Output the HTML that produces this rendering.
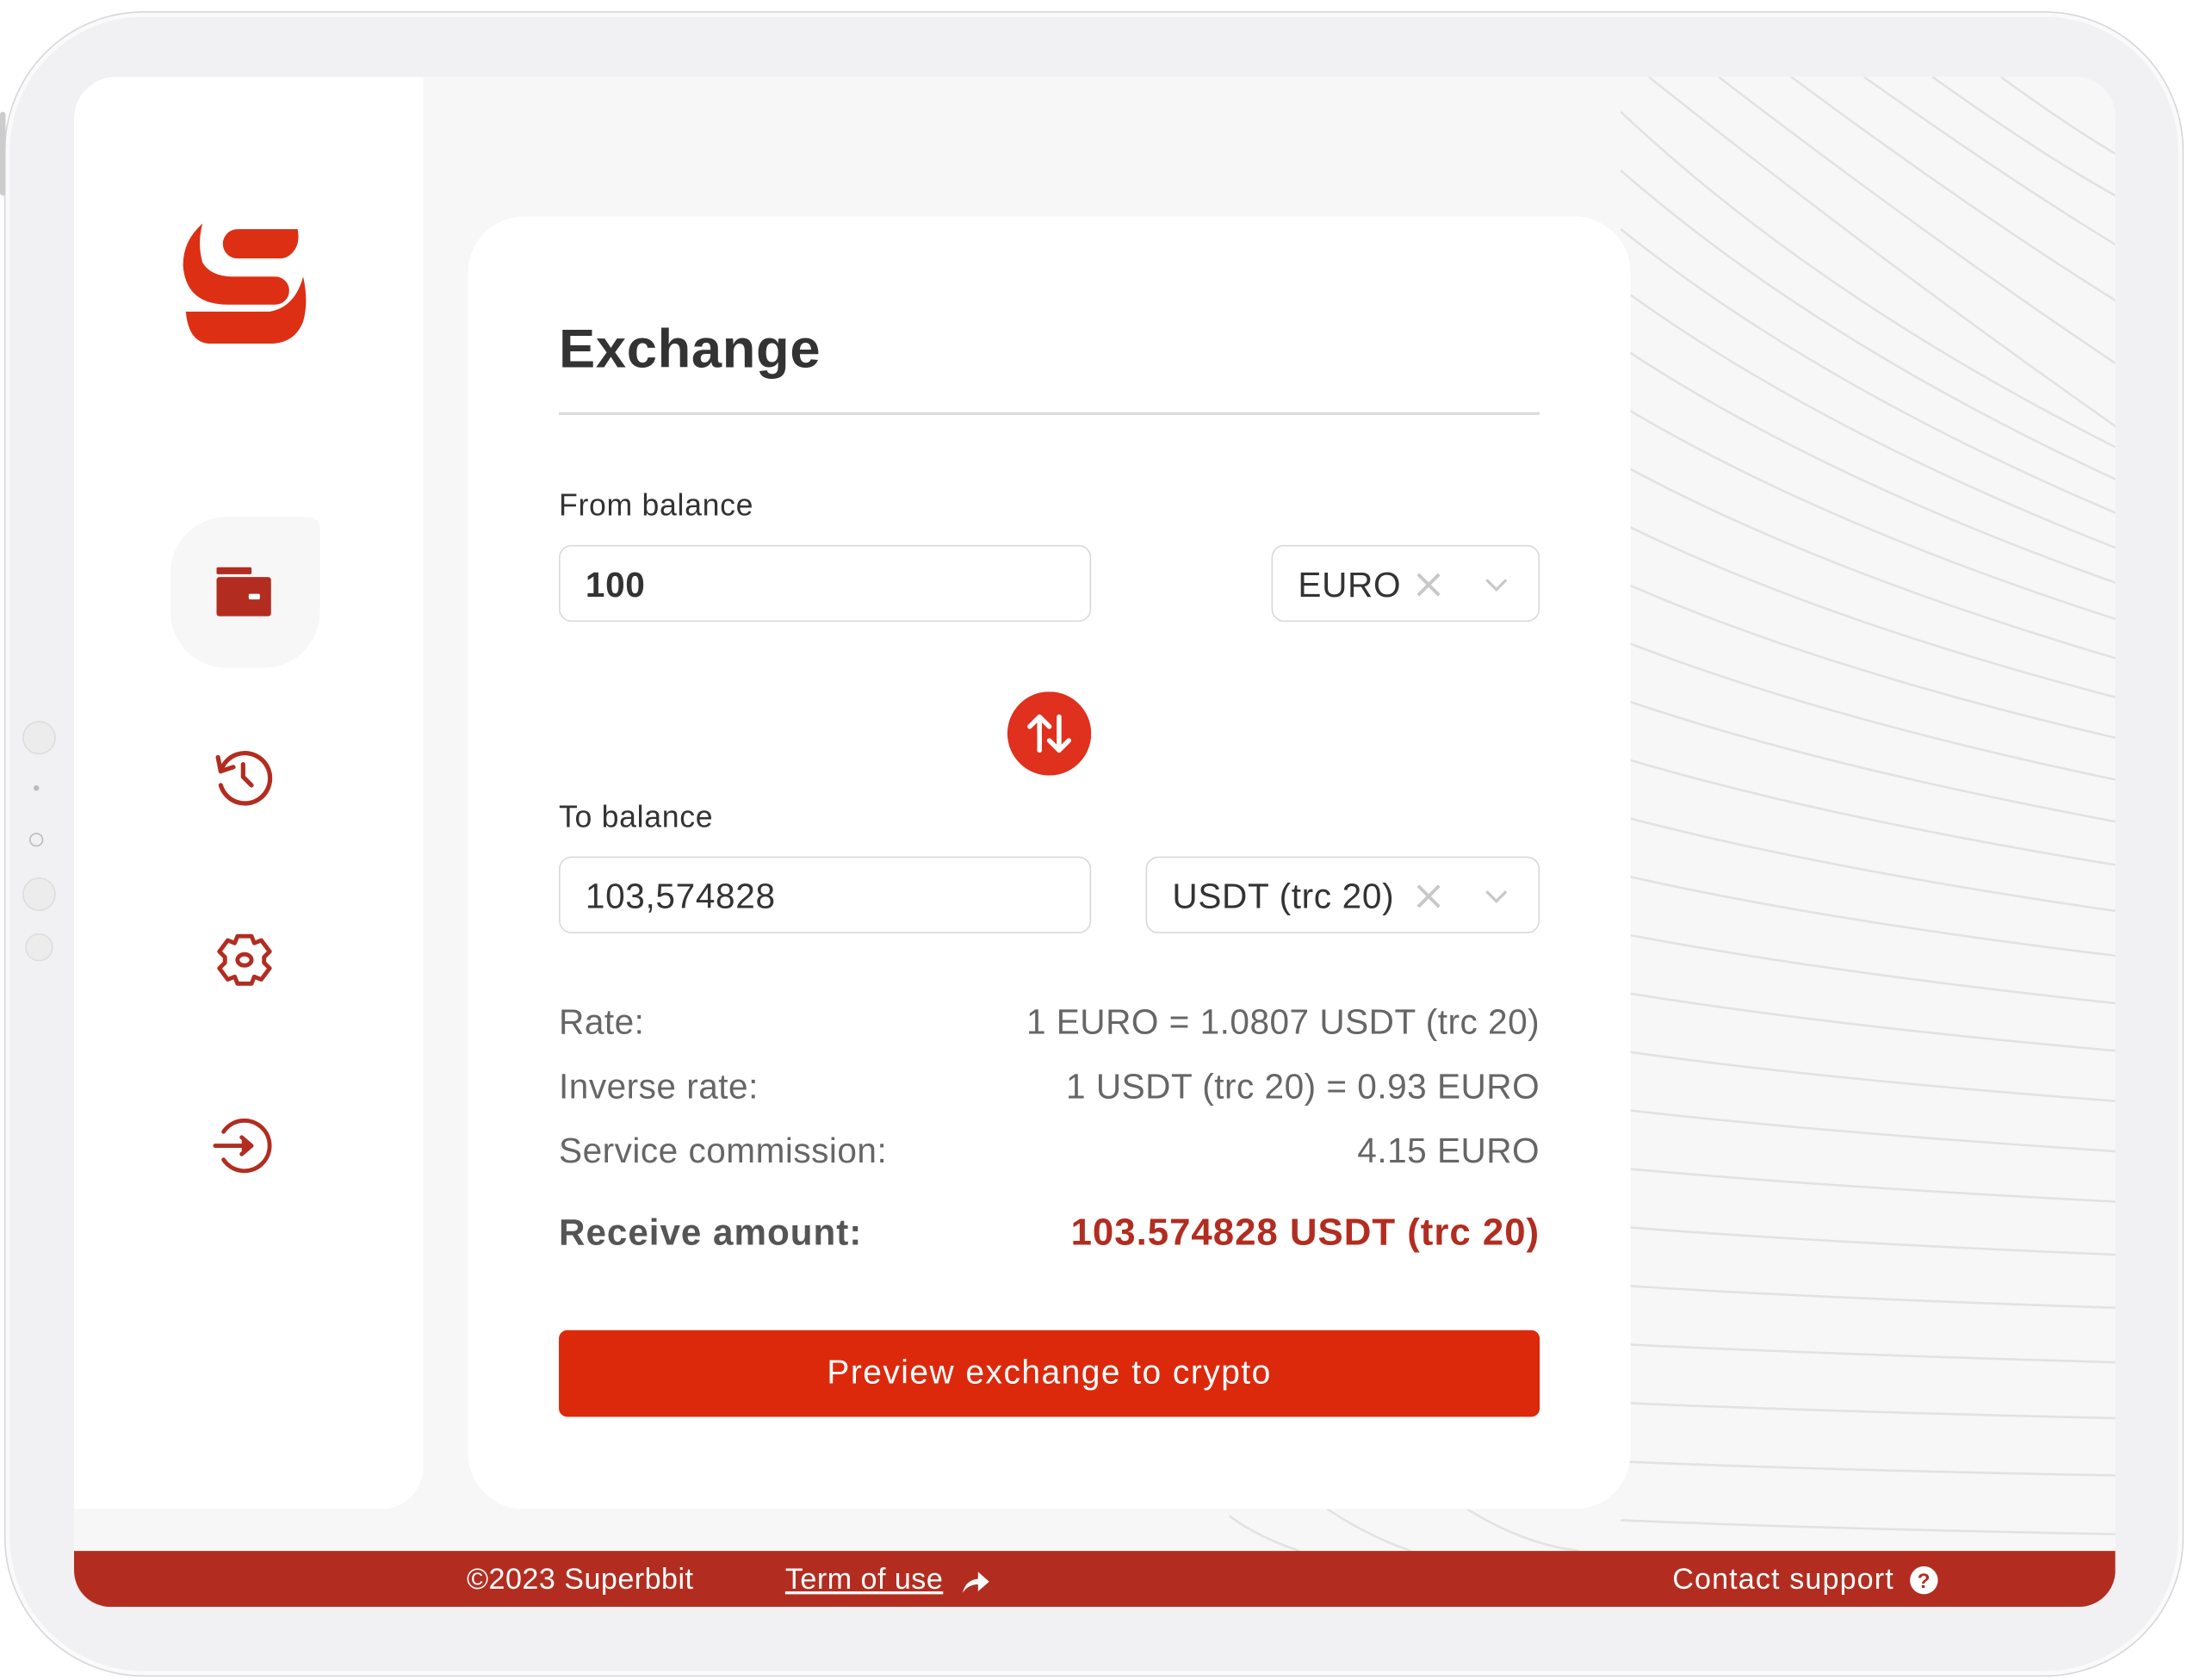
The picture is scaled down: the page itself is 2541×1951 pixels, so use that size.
<!DOCTYPE html>
<html><head><meta charset="utf-8"><style>
html,body{margin:0;padding:0;width:2541px;height:1951px;overflow:hidden;background:#fff;}
#w{position:absolute;left:0;top:0;width:1566px;height:1202px;transform:scale(1.62261);transform-origin:0 0;font-family:"Liberation Sans",sans-serif;}
.abs{position:absolute;}
.dev{left:3px;top:8px;width:1558px;height:1190px;border-radius:100px;background:#f1f1f3;border:1px solid #d8d8dc;box-shadow:inset 0 0 0 3px #fafafa;}
.scr{left:53px;top:55px;width:1461px;height:1095px;border-radius:30px 28px 26px 26px;background:#f7f7f7;overflow:hidden;}
.side{left:0;top:0;width:250px;height:1025px;background:#fff;border-radius:30px 0 30px 0;}
.card{left:282px;top:100px;width:832px;height:925px;background:#fff;border-radius:40px;}
.foot{left:0;top:1055px;width:1461px;height:40px;background:#b22d20;color:#fff;font-size:21px;letter-spacing:0.3px;}
.lbl{font-size:22px;color:#333;letter-spacing:0.4px;}
.inp{border:1.5px solid #d9d9d9;border-radius:9px;height:55px;box-sizing:border-box;font-size:25px;color:#333;line-height:57px;padding-left:18px;letter-spacing:0.4px;}
.row{font-size:25px;color:#666;letter-spacing:0.3px;}
</style></head><body><div id="w">
<div class="abs dev"></div>
<div class="abs" style="left:0;top:80px;width:4px;height:60px;background:#ccc;border-radius:2px"></div>
<div class="abs" style="left:16px;top:516px;width:22px;height:22px;border-radius:50%;background:#ececec;border:1px solid #ddd"></div>
<div class="abs" style="left:24px;top:562px;width:4px;height:4px;border-radius:50%;background:#bbb"></div>
<div class="abs" style="left:21px;top:596px;width:10px;height:10px;border-radius:50%;border:1.5px solid #bbb;box-sizing:border-box"></div>
<div class="abs" style="left:16px;top:628px;width:22px;height:22px;border-radius:50%;background:#ececec;border:1px solid #ddd"></div>
<div class="abs" style="left:18px;top:668px;width:18px;height:18px;border-radius:50%;background:#ececec;border:1px solid #ddd"></div>
<div class="abs scr">
<svg class="abs" style="left:0;top:0" width="1461" height="1095" viewBox="53 55 1461 1095" fill="none" stroke="#e2e2e2" stroke-width="1.6">
<path d="M1180 55 Q1350 190 1514 305"/><path d="M1230 55 Q1380 170 1514 260"/><path d="M1282 55 Q1410 150 1514 215"/><path d="M1334 55 Q1440 130 1514 175"/><path d="M1383 55 Q1460 110 1514 140"/><path d="M1432 55 Q1480 90 1514 110"/>
<path d="M1160 80 Q1300 212 1514 320"/><path d="M1160 122 Q1300 244 1514 343"/><path d="M1160 164 Q1300 276 1514 367"/><path d="M1160 206 Q1300 308 1514 392"/><path d="M1160 248 Q1300 341 1514 417"/><path d="M1160 290 Q1300 374 1514 443"/><path d="M1160 332 Q1300 408 1514 471"/><path d="M1160 374 Q1300 443 1514 499"/><path d="M1160 416 Q1300 478 1514 528"/><path d="M1160 458 Q1300 513 1514 558"/><path d="M1160 500 Q1300 548 1514 588"/><path d="M1160 542 Q1300 584 1514 619"/><path d="M1160 584 Q1300 621 1514 652"/><path d="M1160 626 Q1300 658 1514 684"/><path d="M1160 668 Q1300 695 1514 718"/><path d="M1160 710 Q1300 733 1514 752"/><path d="M1160 752 Q1300 772 1514 788"/><path d="M1160 794 Q1300 810 1514 824"/><path d="M1160 836 Q1300 849 1514 860"/><path d="M1160 878 Q1300 889 1514 898"/><path d="M1160 920 Q1300 929 1514 936"/><path d="M1160 962 Q1300 969 1514 975"/><path d="M1160 1004 Q1300 1010 1514 1015"/><path d="M1160 1046 Q1300 1052 1514 1056"/><path d="M1160 1088 Q1300 1094 1514 1098"/>
<path d="M880 1085 Q900 1100 930 1110"/><path d="M950 1080 Q980 1100 1010 1110"/><path d="M1050 1080 Q1090 1105 1130 1110"/>
</svg>
<div class="abs side"></div>
<svg class="abs" style="left:78px;top:105px" width="90" height="86" viewBox="0 0 90 86" fill="#dc2f14">
<path d="M39 4 H82 Q84 14 79 20 Q75 25 69 25 H39 A10.5 10.5 0 0 1 39 4Z"/>
<path d="M14 0 Q0 12 0 30 Q2 58 32 58 H66 A10 10 0 0 0 66 38 H36 Q20 38 14 28 Q10 14 14 0Z"/>
<path d="M2 63 H62 Q80 60 86 38 Q90 56 86 70 Q80 86 62 86 H20 Q4 86 2 63Z"/>
</svg>
<div class="abs" style="left:69px;top:315px;width:107px;height:108px;background:#f7f7f7;border-radius:40px 8px 40px 40px"></div>
<svg class="abs" style="left:100px;top:348px" width="44" height="40" viewBox="0 0 44 40">
<rect x="2" y="3" width="25" height="5" rx="1" fill="#b22d20"/>
<rect x="2" y="10" width="39" height="28" rx="2" fill="#b22d20"/>
<rect x="25" y="22" width="8" height="4" rx="1" fill="#fff"/>
</svg>
<svg class="abs" style="left:97px;top:477px" width="50" height="50" viewBox="0 0 50 50" fill="none" stroke="#b22d20" stroke-width="3.2" stroke-linecap="round" stroke-linejoin="round">
<path d="M8 20 A18 18 0 1 1 8 30"/><path d="M6 10 L8 20 L17 17"/><path d="M24 15 V24 L30 30"/>
</svg>
<svg class="abs" style="left:97px;top:607px" width="50" height="50" viewBox="0 0 50 50" fill="none" stroke="#b22d20" stroke-width="3" stroke-linejoin="round">
<path d="M20 8 H30 L32 13 L37 11 L43 19 L39 23 V27 L43 31 L37 39 L32 37 L30 42 H20 L18 37 L13 39 L7 31 L11 27 V23 L7 19 L13 11 L18 13 Z"/>
<ellipse cx="25" cy="25" rx="5" ry="4"/>
</svg>
<svg class="abs" style="left:98px;top:740px" width="52" height="50" viewBox="0 0 52 50" fill="none" stroke="#b22d20" stroke-width="3" stroke-linecap="round">
<path d="M9 15 A18 18 0 1 1 9 35"/><path d="M3 25 H28"/><path d="M22 19 L29 25 L22 31" fill="#b22d20" stroke-linejoin="round"/>
</svg>
<div class="abs card">
<div class="abs" style="left:65px;top:74px;font-size:39px;font-weight:bold;color:#333;letter-spacing:0.4px">Exchange</div>
<div class="abs" style="left:65px;top:140px;width:702px;height:2px;background:#dcdcdc"></div>
<div class="abs lbl" style="left:65px;top:194px">From balance</div>
<div class="abs inp" style="left:65px;top:235px;width:381px;font-weight:bold">100</div>
<div class="abs inp" style="left:575px;top:235px;width:192px">EURO</div>
<div class="abs lbl" style="left:65px;top:417px">To balance</div>
<div class="abs inp" style="left:65px;top:458px;width:381px">103,574828</div>
<div class="abs inp" style="left:485px;top:458px;width:282px">USDT (trc 20)</div>
<svg class="abs" style="left:670px;top:251px" width="80" height="25" viewBox="0 0 80 25" fill="none" stroke="#c8c8c8" stroke-width="2.4"><path d="M10 5 L25 20 M25 5 L10 20"/><path d="M59 9 L66 16 L73 9" stroke-width="2"/></svg>
<svg class="abs" style="left:670px;top:474px" width="80" height="25" viewBox="0 0 80 25" fill="none" stroke="#c8c8c8" stroke-width="2.4"><path d="M10 5 L25 20 M25 5 L10 20"/><path d="M59 9 L66 16 L73 9" stroke-width="2"/></svg>
<svg class="abs" style="left:386px;top:340px" width="60" height="60" viewBox="0 0 60 60"><circle cx="30" cy="30" r="30" fill="#e0301e"/><g fill="none" stroke="#fff" stroke-width="3.4" stroke-linecap="round" stroke-linejoin="round"><path d="M23 42 V18 M16 25 L23 18 L30 25"/><path d="M37 18 V42 M30 35 L37 42 L44 35"/></g></svg>
<div class="abs row" style="left:65px;top:563px">Rate:</div>
<div class="abs row" style="right:65px;top:563px">1 EURO = 1.0807 USDT (trc 20)</div>
<div class="abs row" style="left:65px;top:609px">Inverse rate:</div>
<div class="abs row" style="right:65px;top:609px">1 USDT (trc 20) = 0.93 EURO</div>
<div class="abs row" style="left:65px;top:655px">Service commission:</div>
<div class="abs row" style="right:65px;top:655px">4.15 EURO</div>
<div class="abs" style="left:65px;top:712px;font-size:26px;font-weight:bold;color:#555;letter-spacing:0.6px">Receive amount:</div>
<div class="abs" style="right:65px;top:712px;font-size:27px;font-weight:bold;color:#b22d20;letter-spacing:0.6px">103.574828 USDT (trc 20)</div>
<div class="abs" style="left:65px;top:797px;width:702px;height:62px;background:#dc290c;border-radius:6px;color:#fff;font-size:24px;letter-spacing:0.9px;text-align:center;line-height:62px">Preview exchange to crypto</div>
</div>
<div class="abs foot" style="border-radius:0 0 18px 18px">
<div class="abs" style="left:281px;top:9px">©2023 Superbbit</div>
<div class="abs" style="left:509px;top:9px;text-decoration:underline">Term of use</div>
<svg class="abs" style="left:634px;top:12px" width="22" height="20" viewBox="0 0 22 20"><path d="M2 18 Q4 9 13 8 V3 L21 10 L13 17 V12 Q6 12 2 18Z" fill="#fff"/></svg>
<div class="abs" style="left:1144px;top:9px;letter-spacing:0.7px">Contact support</div>
<svg class="abs" style="left:1313px;top:10px" width="22" height="22" viewBox="0 0 22 22"><circle cx="11" cy="11" r="10" fill="#fff"/><text x="11" y="16.5" text-anchor="middle" font-family="Liberation Sans" font-weight="bold" font-size="15" fill="#b22d20">?</text></svg>
</div>
</div>
</div></body></html>
